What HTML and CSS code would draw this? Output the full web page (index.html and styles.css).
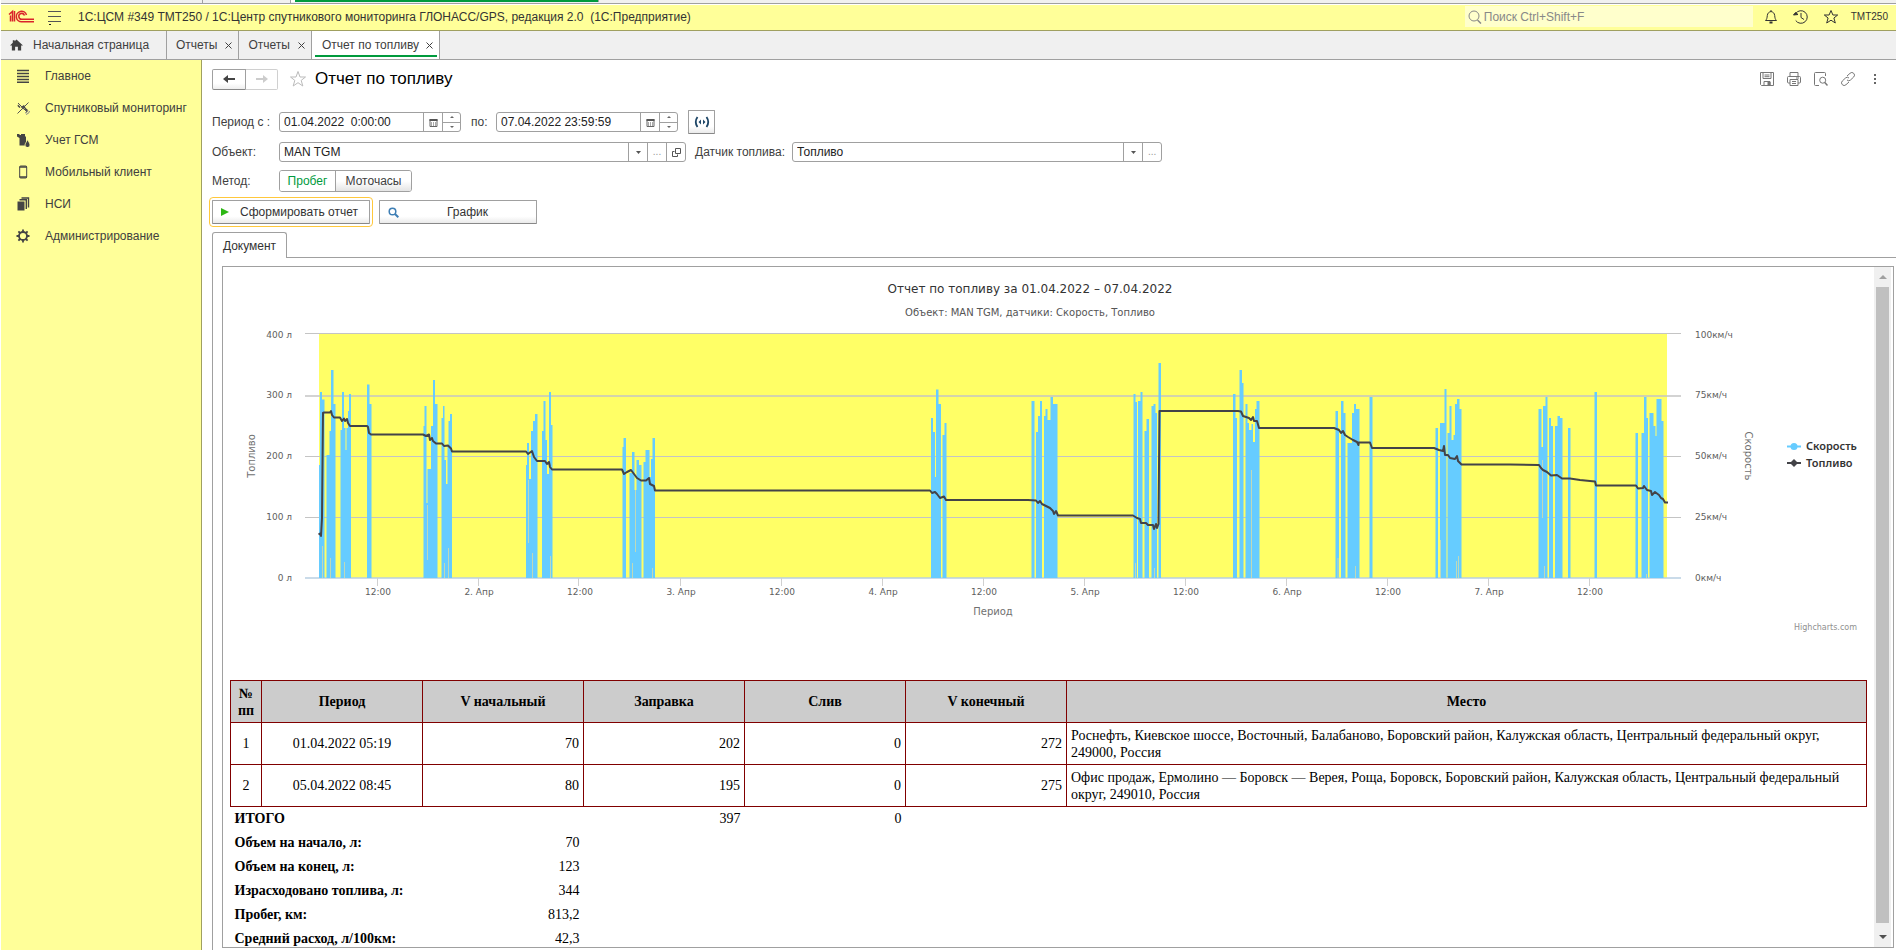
FILE: index.html
```html
<!DOCTYPE html>
<html lang="ru">
<head>
<meta charset="utf-8">
<title>Отчет по топливу</title>
<link rel="stylesheet" href="styles.css">
</head>
<body>
<div class="app">
  <div class="strip"><span class="strip-a"></span><span class="strip-b"></span><span class="strip-active"></span></div>

  <header class="header">
    <svg class="logo" viewBox="0 0 28 16" width="28" height="16" fill="none" stroke="#d9232b">
      <path d="M2 5.5L5.5 2.5V12.5M3.500 6.500V12.500M7.500 2V12.500" stroke-width="1.500"/>
      <path d="M19.500 6A5.200 5.200 0 1 0 15 12.700H27M17.500 6.500A2.900 2.900 0 1 0 15 10.200H27" stroke-width="1.500"/>
    </svg>
    <button class="icon-btn" aria-label="Меню">
      <svg viewBox="0 0 14 18" width="14" height="18" stroke="#555" fill="none"><path d="M0 3.500H13M0 8.500H13M0 13.500H13"/><path d="M1 16.500H3" stroke="#222"/></svg>
    </button>
    <h1 class="app-title">1С:ЦСМ #349 ТМТ250 / 1С:Центр спутникового мониторинга ГЛОНАСС/GPS, редакция 2.0&nbsp; (1С:Предприятие)</h1>
    <label class="search">
      <svg viewBox="0 0 14 14" width="14" height="14" stroke="#888" fill="none"><circle cx="6" cy="6" r="5"/><path d="M9.500 10L13 13.500" stroke-width="1.500"/></svg>
      <input type="text" placeholder="Поиск Ctrl+Shift+F" aria-label="Поиск">
    </label>
    <div class="header-tools">
      <button class="icon-btn" aria-label="Оповещения"><svg viewBox="0 0 16 16" width="16" height="16" stroke="#333" fill="none"><path d="M2.500 11.500C4 10 4 9 4.300 6.500C4.600 4 6 3 8 2.500C10 3 11.400 4 11.700 6.500C12 9 12 10 13.500 11.500Z"/><path d="M8 1V2.500"/><path d="M6.500 13.500H9.500" stroke-width="2"/></svg></button>
      <button class="icon-btn" aria-label="История"><svg viewBox="0 0 16 16" width="16" height="16" stroke="#333" fill="none"><path d="M2.700 4.500A6.300 6.300 0 1 1 2.700 11.500"/><path d="M.5 6L2.500 3.500L5 5.500Z" fill="#333"/><path d="M8 4V8.500L11 10.500"/></svg></button>
      <button class="icon-btn" aria-label="Избранное"><svg viewBox="0 0 16 16" width="16" height="16" stroke="#333" fill="none"><path d="M8 1.500L9.900 6H14.700L10.900 9L12.300 14L8 11.200L3.700 14L5.100 9L1.300 6H6.100Z"/></svg></button>
      <span class="user">ТМТ250</span>
    </div>
  </header>

  <nav class="tabs" aria-label="Открытые окна">
    <a class="tab tab-home" href="#"><svg viewBox="0 0 14 12" width="13" height="12" fill="#404040"><path d="M7 0L14 6.500H12V12H8.500V8H5.500V12H2V6.500H0L3 3.700V1H5V2Z"/></svg><span>Начальная страница</span></a>
    <a class="tab" href="#"><span>Отчеты</span><svg viewBox="0 0 7 7" width="7" height="7" stroke="#404040"><path d="M.5 .5L6.500 6.500M6.500 .5L.5 6.500"/></svg></a>
    <a class="tab" href="#"><span>Отчеты</span><svg viewBox="0 0 7 7" width="7" height="7" stroke="#404040"><path d="M.5 .5L6.500 6.500M6.500 .5L.5 6.500"/></svg></a>
    <a class="tab tab-current" href="#"><span>Отчет по топливу</span><svg viewBox="0 0 7 7" width="7" height="7" stroke="#404040"><path d="M.5 .5L6.500 6.500M6.500 .5L.5 6.500"/></svg></a>
  </nav>

  <div class="body">
    <nav class="sidebar" aria-label="Разделы">
      <a href="#"><svg viewBox="0 0 14 14" width="14" height="14" stroke="#444" stroke-width="1.500"><path d="M1 1.500H13M1 4.500H13M1 7.500H13M1 10.500H13M1 13.200H13"/></svg>Главное</a>
      <a href="#"><svg viewBox="0 0 14 14" width="14" height="14" fill="#444"><path d="M5 6L8 4L9.500 6.500L7 8.500Z"/><path d="M2 3.500L4.500 6L3.500 7L1.500 5ZM9 6.500L12 9L11 10.500L8.500 8Z"/><path d="M2 2L11 11M1.500 12.500L12.500 1.500" stroke="#555"/><path d="M9 12Q11.500 11.500 12 9.500M10 13.500Q13.500 12.500 13.500 10" stroke="#888" fill="none"/></svg>Спутниковый мониторинг</a>
      <a href="#"><svg viewBox="0 0 14 14" width="14" height="14" fill="#444"><path d="M1 1H3.500V2H5V1H9V3L10 4V12.500H3.500V5L1 3.500Z"/><path d="M11.500 6.500C13 9.500 14 10.500 14 12A2.300 2.300 0 0 1 9 12C9 10.500 10.500 9 11.500 6.500Z" stroke="#ffff99" stroke-width=".8"/></svg>Учет ГСМ</a>
      <a href="#"><svg viewBox="0 0 14 14" width="14" height="14"><rect x="3.700" y="1" width="7" height="12" rx="1" fill="none" stroke="#444"/><path d="M3.500 2H11M3.500 12H11" stroke="#444" stroke-width="1.600"/></svg>Мобильный клиент</a>
      <a href="#"><svg viewBox="0 0 14 14" width="14" height="14"><path d="M1.500 4.500H8.500V13.500H1.500Z" fill="#444"/><path d="M3.500 2.800H10.300V12M5.500 1H12.500V10.500" fill="none" stroke="#444" stroke-width="1.400"/></svg>НСИ</a>
      <a href="#"><svg viewBox="0 0 14 14" width="14" height="14"><circle cx="7" cy="7" r="4" fill="none" stroke="#444" stroke-width="1.800"/><path d="M7 .5V3M7 11V13.500M.5 7H3M11 7H13.500M2.400 2.400L4 4M10 10L11.600 11.600M11.600 2.400L10 4M4 10L2.400 11.600" stroke="#444" stroke-width="1.800"/></svg>Администрирование</a>
    </nav>

    <main class="main">
      <div class="titlebar">
        <div class="history">
          <button aria-label="Назад"><svg viewBox="0 0 14 10" width="14" height="10" fill="#444"><path d="M1 5L6 1V4H13V6H6V9Z"/></svg></button>
          <button aria-label="Вперед" disabled><svg viewBox="0 0 14 10" width="14" height="10" fill="#ccc"><path d="M13 5L8 1V4H1V6H8V9Z"/></svg></button>
        </div>
        <svg class="fav" viewBox="0 0 18 18" width="18" height="18" stroke="#bbb" fill="none"><path d="M9 1.500L11 7H16.500L12.200 10.400L13.800 16L9 12.700L4.200 16L5.800 10.400L1.500 7H7Z"/></svg>
        <h2>Отчет по топливу</h2>
        <div class="title-tools">
          <button class="icon-btn" aria-label="Сохранить"><svg viewBox="0 0 14 14" width="14" height="14" stroke="#777" fill="none"><path d="M.5 .5H13.500V13.500H1.500L.5 12.500Z"/><path d="M3 1V6.500H11V1M4.500 3H9.500M4.500 4.700H9.500"/><path d="M4 13.500V9.500H10V13.500" /><path d="M8 10H10V13H8Z" fill="#777"/></svg></button>
          <button class="icon-btn" aria-label="Печать"><svg viewBox="0 0 14 14" width="14" height="14" stroke="#777" fill="none"><path d="M3 4V.5H11V4M3 11H1.500Q.5 11 .5 10V5.500Q.5 4.500 1.500 4.500H12.500Q13.500 4.500 13.500 5.500V10Q13.500 11 12.500 11H11"/><path d="M3 7.500H11V13.500H3ZM5 9.500H9M5 11.500H9M9 6H12"/></svg></button>
          <button class="icon-btn" aria-label="Предварительный просмотр"><svg viewBox="0 0 14 14" width="14" height="14" stroke="#777" fill="none"><path d="M5 13.500H1.500Q.5 13.500 .5 12.500V1.500Q.5 .5 1.500 .5H10.500Q11.500 .5 11.500 1.500V4"/><circle cx="8.700" cy="8.200" r="3"/><path d="M10.800 10.500L13.500 13.500" stroke-width="1.500"/></svg></button>
          <button class="icon-btn" aria-label="Ссылка"><svg viewBox="0 0 14 14" width="14" height="14" stroke="#777" fill="none"><path d="M6 4L9 1.300A2.500 2.500 0 0 1 12.700 5L9.500 8A2.500 2.500 0 0 1 6 8M8 10L5 12.700A2.500 2.500 0 0 1 1.300 9L4.500 6A2.500 2.500 0 0 1 8 6"/></svg></button>
          <button class="icon-btn" aria-label="Еще"><svg viewBox="0 0 14 14" width="14" height="14" fill="#666"><path d="M6 2H8V4H6ZM6 6H8V8H6ZM6 10H8V12H6Z"/></svg></button>
        </div>
      </div>

      <form class="form">
        <div class="row row-period">
          <label class="cap" for="from">Период с :</label>
          <div class="field field-date">
            <input id="from" type="text" value="01.04.2022  0:00:00">
            <button type="button" aria-label="Календарь"><svg viewBox="0 0 9 9" width="9" height="9"><path d="M1 1.500H8V8.500H1Z" fill="#fff" stroke="#666"/><path d="M.5 2H8.500" stroke="#555" stroke-width="2"/><path d="M2 5H7M2 7H7" stroke="#555" stroke-dasharray="1 1"/></svg></button>
            <span class="spin"><button type="button" aria-label="Больше"><svg viewBox="0 0 4 2" width="4" height="2"><path d="M0 2L2 0L4 2Z" fill="#666"/></svg></button><button type="button" aria-label="Меньше"><svg viewBox="0 0 4 2" width="4" height="2"><path d="M0 0L2 2L4 0Z" fill="#666"/></svg></button></span>
          </div>
          <label class="cap-to" for="to">по:</label>
          <div class="field field-date">
            <input id="to" type="text" value="07.04.2022 23:59:59">
            <button type="button" aria-label="Календарь"><svg viewBox="0 0 9 9" width="9" height="9"><path d="M1 1.500H8V8.500H1Z" fill="#fff" stroke="#666"/><path d="M.5 2H8.500" stroke="#555" stroke-width="2"/><path d="M2 5H7M2 7H7" stroke="#555" stroke-dasharray="1 1"/></svg></button>
            <span class="spin"><button type="button" aria-label="Больше"><svg viewBox="0 0 4 2" width="4" height="2"><path d="M0 2L2 0L4 2Z" fill="#666"/></svg></button><button type="button" aria-label="Меньше"><svg viewBox="0 0 4 2" width="4" height="2"><path d="M0 0L2 2L4 0Z" fill="#666"/></svg></button></span>
          </div>
          <button type="button" class="btn btn-period" aria-label="Выбрать период"><svg viewBox="0 0 16 12" width="16" height="12" fill="none" stroke="#1d4566" stroke-width="1.800"><path d="M3.500 1Q0 6 3.500 11M12.500 1Q16 6 12.500 11"/><path d="M7 3.500V8.500L4.500 6ZM9 3.500V8.500L11.500 6Z" fill="#1d4566" stroke="none"/></svg></button>
        </div>

        <div class="row">
          <label class="cap" for="object">Объект:</label>
          <div class="field field-object">
            <select id="object"><option>MAN TGM</option></select>
            <span class="cell" aria-hidden="true"><svg viewBox="0 0 5 3" width="5" height="3"><path d="M0 0H5L2.500 3Z" fill="#555"/></svg></span>
            <button type="button" class="dots">...</button>
            <button type="button" aria-label="Открыть"><svg viewBox="0 0 9 9" width="9" height="9" fill="none" stroke="#555"><path d="M3.500 .5H8.500V5.500H3.500ZM2.500 3.500H.5V8.500H5.500V6.500"/></svg></button>
          </div>
          <label class="cap-sensor" for="sensor">Датчик топлива:</label>
          <div class="field field-sensor">
            <select id="sensor"><option>Топливо</option></select>
            <span class="cell" aria-hidden="true"><svg viewBox="0 0 5 3" width="5" height="3"><path d="M0 0H5L2.500 3Z" fill="#555"/></svg></span>
            <button type="button" class="dots">...</button>
          </div>
        </div>

        <div class="row row-method">
          <span class="cap">Метод:</span>
          <div class="segment" role="radiogroup" aria-label="Метод">
            <label><input type="radio" name="method" checked><span>Пробег</span></label>
            <label><input type="radio" name="method"><span>Моточасы</span></label>
          </div>
        </div>

        <div class="row row-actions">
          <button type="button" class="btn btn-wide btn-focus"><svg viewBox="0 0 8 8" width="8" height="8" fill="#2db714"><path d="M0 0L8 4L0 8Z"/></svg><span>Сформировать отчет</span></button>
          <button type="button" class="btn btn-wide"><svg viewBox="0 0 11 11" width="11" height="11" fill="none" stroke="#3f7fb5"><circle cx="4.500" cy="4.500" r="3.300" stroke-width="1.500"/><path d="M7 7L10.300 10.300" stroke-width="2"/></svg><span>График</span></button>
        </div>
      </form>

      <div class="doc-tabs"><button class="doc-tab">Документ</button></div>

      <div class="doc-area">
        <div class="doc">
          <div class="doc-content">
            <svg class="chart" viewBox="223 267 1651 413" role="img" aria-label="График топлива и скорости">
              <rect x="319" y="334" width="1348" height="244" fill="#ffff66"/>
              <g stroke="#c4c4c4">
                <path d="M305 333.500H1681M305 456.500H1681M305 517.500H1681"/>
                <path d="M305 396H1681" stroke-width="1.600"/>
                <path d="M305 578H1681" stroke="#b9cfe2" stroke-width="1.600"/>
                <path stroke="#d0d0d0" d="M377.500 578V586M478.500 578V586M578.500 578V586M680.500 578V586M781.500 578V586M882.500 578V586M983.500 578V586M1084.500 578V586M1185.500 578V586M1286.500 578V586M1387.500 578V586M1488.500 578V586M1589.500 578V586"/>
              </g>
              <g fill="#66ccff">
                <path d="M319 578V465H320V392H322V399.500H324.500V578ZM326.500 578V455H329.500V431H331V370H333.500V404H335.500V578ZM340.500 578V430H342V392H344V428H345.500V450H346.500V428H348V411H349V394H351V578ZM367 578V384.500H369.500V404H371.500V578Z"/>
                <path d="M423.500 578V426H424.500V406H426.500V503H427.500V469H431V426H433V380H435V404H437.500V578ZM441.500 578V418H443V406H444.500V460H446V484H447.500V446H448.500V421H450V414H452V578Z"/>
                <path d="M526 578V465H527V443H529V479H531V431H533V421H535V414H537.500V578ZM542 578V431H543.500V401H545.500V440H547V474H549V392H551V425H552.500V578Z"/>
                <path d="M622.500 578V447H623.500V438H626V578ZM629.500 578V473H632V452H634.500V490H636.500V460H639V465H641.500V578ZM643.500 578V462H645.500V450H649.500V477H651V459H652.500V438H655V578Z"/>
                <path d="M931 578V418H933V432H935V477H936V389.500H938.500V404H941V578ZM942.500 578V435H944.500V423H946.500V578Z"/>
                <path d="M1031.500 578V401H1034.500V578ZM1036 578V432H1038V416H1040V401H1042V578ZM1044 578V416H1045.500V409H1047.500V420H1050.500V397H1053V404H1057.500V578Z"/>
                <path d="M1133.500 578V394H1135.500V402H1137V578ZM1138 578V401H1140.500V392H1142.500V578ZM1144.500 578V431H1146.500V419H1149V578ZM1151.500 578V406H1153.500V404H1155.500V413H1157V578ZM1158.500 578V363H1161V578Z"/>
                <path d="M1233 578V394H1235.500V418H1237V578ZM1239.500 578V370H1242V383H1243.500V578ZM1245.500 578V404H1247.500V423H1249V430H1251.500V424H1253V442H1255V409H1256.500V401H1259.500V578Z"/>
                <path d="M1335.500 578V411H1338V428H1339V578ZM1341 578V401H1343.500V413H1345.500V578ZM1347.500 578V443H1352V413H1354V404H1356V409H1359.500V578ZM1369.500 578V397H1372.500V578Z"/>
                <path d="M1435.500 578V428H1438V578ZM1440 578V423H1444.500V389H1446.500V578ZM1447.500 578V433H1449.500V406H1451.500V440H1453.500V435H1455V404H1457V399H1459.500V409H1461.500V578Z"/>
                <path d="M1538.500 578V409H1541.500V447H1543V406H1545.500V397H1547.500V578ZM1549 578V418H1551V426H1553V578ZM1555 578V426H1557.500V416H1560V418H1562.500V578ZM1568 578V428H1570.500V578ZM1594.500 578V392H1597V578Z"/>
                <path d="M1635.500 578V433H1638V578ZM1641.500 578V433H1644V397H1646.500V418H1648V578ZM1649.500 578V413H1653.500V426H1655.500V436H1656.500V399H1661.500V421H1663.500V578Z"/>
              </g>
              <path fill="none" stroke="#d3dca8" stroke-width=".8" d="M322.500 578V546M330.500 578V558M344.500 578V562M427.500 560V505M444.500 578V563M448.500 578V548M528.500 543V480M532.500 553V578M550.500 556V578M632.500 563V578M635.500 552V490M652.500 568V578M1135.500 563V578M1154.500 568V578M1251.500 470V578M1338 558V578M1355.500 566V578M1440.500 540V578M1456.500 561V578M1458.500 556V578M1542.500 460V518M1544.500 566V578M1646.500 574V578"/>
              <path fill="none" stroke="#434348" stroke-width="2" stroke-linejoin="round" d="M318.500 534.500L320 533.500L321 536L322 518L323 413L324 412.500H330L331 411L332 415L334 417.500H340L342 421L344 418.500L345 421L347 419L348 423L350 426H367L368 427L369 433L371 434.500H423L426 436L429 434.500L430 440L432 438L433 441L436 443.500H442L444 446L448 445.500L451 448.500L452 451.500H526L528 454L532 451L534 457L537 461H545L547 464L549 462L550 467L552 469.500H622L624 474L627 472L631 470L634 474L637 478L641 480.500H646L649 478L650 484L654 486L655 490.500H930L932 493L935 492L937 494L940 498L944 496.500L946 500H1028L1036 500.500L1038 503L1040 501L1042 504L1046 506L1050 508L1053 511L1054 514L1056 511L1058 515.500H1133L1137 518L1140 519L1141 523L1146 523L1148 525L1153 525L1154 529L1156 524L1157 528L1158.500 524L1159.500 411H1238L1241 411.500L1243 416L1249 418L1251 420L1253 417L1254 421L1257 421L1259 428H1334L1339 430L1341 433L1343 431L1345 435L1348 437L1353 440L1357 442L1358.500 445V442.500H1370L1372 448H1434L1439 450L1443 451L1444 446L1445 455L1448 455L1450 458L1455 459L1457 456L1458 461L1461.500 464.500H1510L1539 465L1541 468L1543 470L1547 472L1551 475.500L1557 475L1562 478.500H1570L1580 480L1595 481.500L1596 485.500H1636L1638 488.500L1643 488L1644 486L1647 490L1651 491L1652 495L1655 492L1659 495L1661 498L1663 499L1665 502.500H1668"/>
              <text class="c-title" x="1030" y="293" text-anchor="middle">Отчет по топливу за 01.04.2022 – 07.04.2022</text>
              <text class="c-sub" x="1030" y="316" text-anchor="middle">Объект: MAN TGM, датчики: Скорость, Топливо</text>
              <g class="c-axis" text-anchor="end">
                <text x="292" y="338">400 л</text><text x="292" y="398">300 л</text><text x="292" y="459">200 л</text><text x="292" y="520">100 л</text><text x="292" y="581">0 л</text>
              </g>
              <g class="c-axis">
                <text x="1695" y="338">100км/ч</text><text x="1695" y="398">75км/ч</text><text x="1695" y="459">50км/ч</text><text x="1695" y="520">25км/ч</text><text x="1695" y="581">0км/ч</text>
              </g>
              <g class="c-axis" text-anchor="middle">
                <text x="378" y="595">12:00</text><text x="479" y="595">2. Апр</text><text x="580" y="595">12:00</text><text x="681" y="595">3. Апр</text><text x="782" y="595">12:00</text><text x="883" y="595">4. Апр</text><text x="984" y="595">12:00</text><text x="1085" y="595">5. Апр</text><text x="1186" y="595">12:00</text><text x="1287" y="595">6. Апр</text><text x="1388" y="595">12:00</text><text x="1489" y="595">7. Апр</text><text x="1590" y="595">12:00</text>
              </g>
              <g class="c-name" text-anchor="middle">
                <text x="993" y="615">Период</text>
                <text transform="translate(255 456) rotate(-90)">Топливо</text>
                <text transform="translate(1745 456) rotate(90)">Скорость</text>
              </g>
              <g class="c-legend">
                <path d="M1787 446.500H1801" stroke="#66ccff" stroke-width="2"/><circle cx="1794" cy="446.500" r="3.500" fill="#66ccff"/>
                <path d="M1787 463H1801" stroke="#434348" stroke-width="2"/><path d="M1794 459L1798 463L1794 467L1790 463Z" fill="#434348"/>
                <text x="1806" y="450">Скорость</text><text x="1806" y="467">Топливо</text>
              </g>
              <text class="c-credit" x="1857" y="630" text-anchor="end">Highcharts.com</text>
            </svg>

            <table class="report">
              <colgroup><col class="w-num"><col class="w-val"><col class="w-val"><col class="w-val"><col class="w-val"><col class="w-val"><col></colgroup>
              <thead>
                <tr><th>№ пп</th><th>Период</th><th>V начальный</th><th>Заправка</th><th>Слив</th><th>V конечный</th><th>Место</th></tr>
              </thead>
              <tbody>
                <tr><td class="mid">1</td><td class="mid">01.04.2022 05:19</td><td>70</td><td>202</td><td>0</td><td>272</td><td class="place">Роснефть, Киевское шоссе, Восточный, Балабаново, Боровский район, Калужская область, Центральный федеральный округ, 249000, Россия</td></tr>
                <tr><td class="mid">2</td><td class="mid">05.04.2022 08:45</td><td>80</td><td>195</td><td>0</td><td>275</td><td class="place">Офис продаж, Ермолино — Боровск — Верея, Роща, Боровск, Боровский район, Калужская область, Центральный федеральный округ, 249010, Россия</td></tr>
              </tbody>
              <tfoot>
                <tr><th colspan="2">ИТОГО</th><td></td><td>397</td><td>0</td></tr>
                <tr><th colspan="2">Объем на начало, л:</th><td>70</td></tr>
                <tr><th colspan="2">Объем на конец, л:</th><td>123</td></tr>
                <tr><th colspan="2">Израсходовано топлива, л:</th><td>344</td></tr>
                <tr><th colspan="2">Пробег, км:</th><td>813,2</td></tr>
                <tr><th colspan="2">Средний расход, л/100км:</th><td>42,3</td></tr>
              </tfoot>
            </table>
          </div>
          <div class="scroll" aria-hidden="true">
            <svg viewBox="0 0 8 4" width="8" height="4"><path d="M0 4L4 0L8 4Z" fill="#a0a0a0"/></svg>
            <div class="thumb"></div>
            <svg viewBox="0 0 8 4" width="8" height="4"><path d="M0 0L4 4L8 0Z" fill="#505050"/></svg>
          </div>
        </div>
      </div>
    </main>
  </div>
</div>
</body>
</html>
```
FILE: styles.css
```css
* { box-sizing: border-box; }
body { margin: 0; font: 12px/16px "Liberation Sans", Arial, sans-serif; color: #404040; background: #fff; }
button, input, select { font: inherit; color: inherit; margin: 0; }
button { cursor: pointer; padding: 0; }
a { color: inherit; text-decoration: none; }
h1, h2 { margin: 0; font-weight: normal; }
svg { display: block; flex: none; }

.app { display: flex; flex-direction: column; height: 100vh; overflow: hidden; padding-left: 1px; }

.strip { display: flex; flex: none; height: 4px; background: #f0f0f0; border-bottom: 1px solid #a0a0a0; }
.strip-a { width: 202px; border-right: 1px solid #a0a0a0; }
.strip-b { width: 88px; border-right: 1px solid #a0a0a0; }
.strip-active { width: 308px; border: solid #fff; border-width: 0 4px; border-right: 1px solid #a0a0a0; height: 2px; background: #009a3d; }

.header { display: flex; align-items: center; flex: none; height: 26px; margin-top: 1px; padding: 0 8px 2px 0; background: #ffff99; border-bottom: 1px solid #a0a060; }
.logo { margin-left: 6px; }
.icon-btn { display: flex; align-items: center; justify-content: center; background: none; border: 0; }
.logo + .icon-btn { margin-left: 13px; }
.app-title { margin-left: 16px; font-size: 12px; color: #333; white-space: nowrap; }
.search { display: flex; align-items: center; gap: 2px; width: 288px; height: 21px; margin-left: auto; padding-left: 3px; background: #ffffcc; }
.search input { flex: 1; min-width: 0; padding: 0; border: 0; background: none; outline: 0; }
.search input::placeholder { color: #888; opacity: 1; }
.header-tools { display: flex; align-items: center; gap: 14px; margin-left: 10px; }
.user { margin-left: -2px; font-size: 10px; color: #333; }

.tabs { display: flex; flex: none; height: 29px; background: #f0f0f0; border-bottom: 1px solid #a0a0a0; }
.tab { display: flex; align-items: center; gap: 8px; padding: 0 6px 0 9px; border-right: 1px solid #a0a0a0; }
.tab-home { gap: 10px; width: 166px; padding-left: 9px; }
.tab-current { position: relative; gap: 7px; padding-left: 10px; background: #fff; }
.tab-current::after { content: ""; position: absolute; left: 3px; right: 2px; bottom: 2px; height: 2px; background: #009a3d; }

.body { display: flex; flex: 1; min-height: 0; }
.sidebar { flex: none; width: 201px; background: #ffff99; border-right: 1px solid #a0a060; }
.sidebar a { display: flex; align-items: center; gap: 15px; height: 32px; padding-left: 15px; }

.main { display: flex; flex-direction: column; flex: 1; min-width: 0; padding-left: 10px; }
.titlebar { display: flex; align-items: center; flex: none; height: 22px; margin-top: 8px; }
.history { display: flex; }
.history button { display: flex; align-items: center; justify-content: center; width: 34px; height: 21px; background: linear-gradient(#fff 70%, #eee); border: 1px solid #a0a0a0; border-bottom-color: #888; border-radius: 2px 0 0 2px; }
.history button:disabled { width: 32px; border-color: #d0d0d0; border-left: 0; border-radius: 0 2px 2px 0; background: #fff; }
.fav { margin-left: 11px; }
.titlebar h2 { margin-left: 8px; font-size: 17px; line-height: 20px; color: #000; }
.title-tools { display: flex; gap: 13px; margin: 0 14px 0 auto; }

.form { margin-top: 20px; }
.row { display: flex; align-items: center; height: 20px; }
.cap { width: 67px; }
.cap-to { width: 35px; padding-left: 10px; }
.cap-sensor { margin: 0 7px 0 9px; }
.field { display: flex; height: 20px; background: #fff; border: 1px solid #a0a0a0; border-radius: 3px; overflow: hidden; }
.field-date { width: 182px; }
.field-object { width: 407px; }
.field-sensor { width: 370px; }
.field input, .field select { flex: 1; min-width: 0; padding: 0 4px; border: 0; background: none; outline: 0; appearance: none; color: #222; white-space: pre; }
.field button, .cell { display: flex; align-items: center; justify-content: center; width: 19px; background: none; border: 0; border-left: 1px solid #a0a0a0; }
.field .dots { color: #999; font-size: 10px; }
.spin { display: flex; flex-direction: column; width: 18px; border-left: 1px solid #a0a0a0; }
.field .spin button { flex: 1; width: 100%; border-left: 0; }
.field .spin button + button { border-top: 1px solid #a0a0a0; }
.btn { display: flex; align-items: center; justify-content: center; background: linear-gradient(#fff 70%, #eaeaea); border: 1px solid #a0a0a0; border-bottom-color: #888; border-radius: 1px; color: #333; }
.row-period { height: 24px; }
.btn-period { width: 27px; height: 24px; margin-left: 10px; }
.row-period + .row { margin-top: 8px; }
.row-method { height: 22px; margin-top: 8px; }
.segment { display: flex; height: 22px; border: 1px solid #a0a0a0; border-radius: 3px; overflow: hidden; }
.segment label { display: flex; align-items: center; justify-content: center; width: 75px; background: linear-gradient(#fff 50%, #e4e4e4); }
.segment label:first-child { width: 56px; color: #009a3d; background: #fff; border-right: 1px solid #a0a0a0; }
.segment input { appearance: none; width: 0; margin: 0; }
.row-actions { gap: 9px; height: 24px; margin-top: 8px; }
.btn-wide { width: 158px; height: 24px; padding-left: 8px; }
.btn-wide span { flex: 1; text-align: center; }
.btn-focus { outline: 1px solid #ffc83c; outline-offset: 2px; }

.doc-tabs { display: flex; flex: none; margin-top: 8px; }
.doc-tabs::after { content: ""; flex: 1; border-bottom: 1px solid #a0a0a0; }
.doc-tab { width: 75px; height: 26px; background: #fff; border: 1px solid #a0a0a0; border-bottom: 0; border-radius: 3px 3px 0 0; color: #333; }
.doc-area { flex: 1; min-height: 0; padding: 8px 2px 2px 9px; border-left: 1px solid #a0a0a0; }
.doc { display: flex; height: 100%; border: 1px solid #a0a0a0; }
.doc-content { flex: 1; min-width: 0; overflow: hidden; }
.scroll { display: flex; flex-direction: column; align-items: center; gap: 8px; flex: none; width: 17px; margin-right: 2px; padding: 8px 2px; background: #f0f0f0; }
.thumb { flex: 1; width: 13px; margin-bottom: 4px; background: #c0c0c0; }

.chart { width: 100%; height: auto; font-family: "DejaVu Sans", sans-serif; }
.c-title { font-size: 12px; fill: #333; }
.c-sub { font-size: 10px; fill: #555; }
.c-axis { font-size: 9px; fill: #606060; }
.c-name { font-size: 10px; fill: #707070; }
.c-legend { font: 600 11px "Noto Sans", sans-serif; fill: #333; }
.c-credit { font-size: 8px; fill: #909090; }

.report { width: calc(100% - 14px); margin-left: 7px; border-collapse: collapse; table-layout: fixed; font: 14px/17px "Liberation Serif", "Times New Roman", serif; color: #000; }
.w-num { width: 31px; }
.w-val { width: 161px; }
.report th, .report td { padding: 0 4px; }
.report td { text-align: right; }
.report thead tr { height: 42px; }
.report tbody tr { height: 42px; }
.report thead th, .report tbody td { border: 1px solid #800000; }
.report thead th { background: #ccc; }
.report .mid { text-align: center; }
.report .place { text-align: left; }
.report tfoot tr { height: 24px; }
.report tfoot th { text-align: left; }
```
